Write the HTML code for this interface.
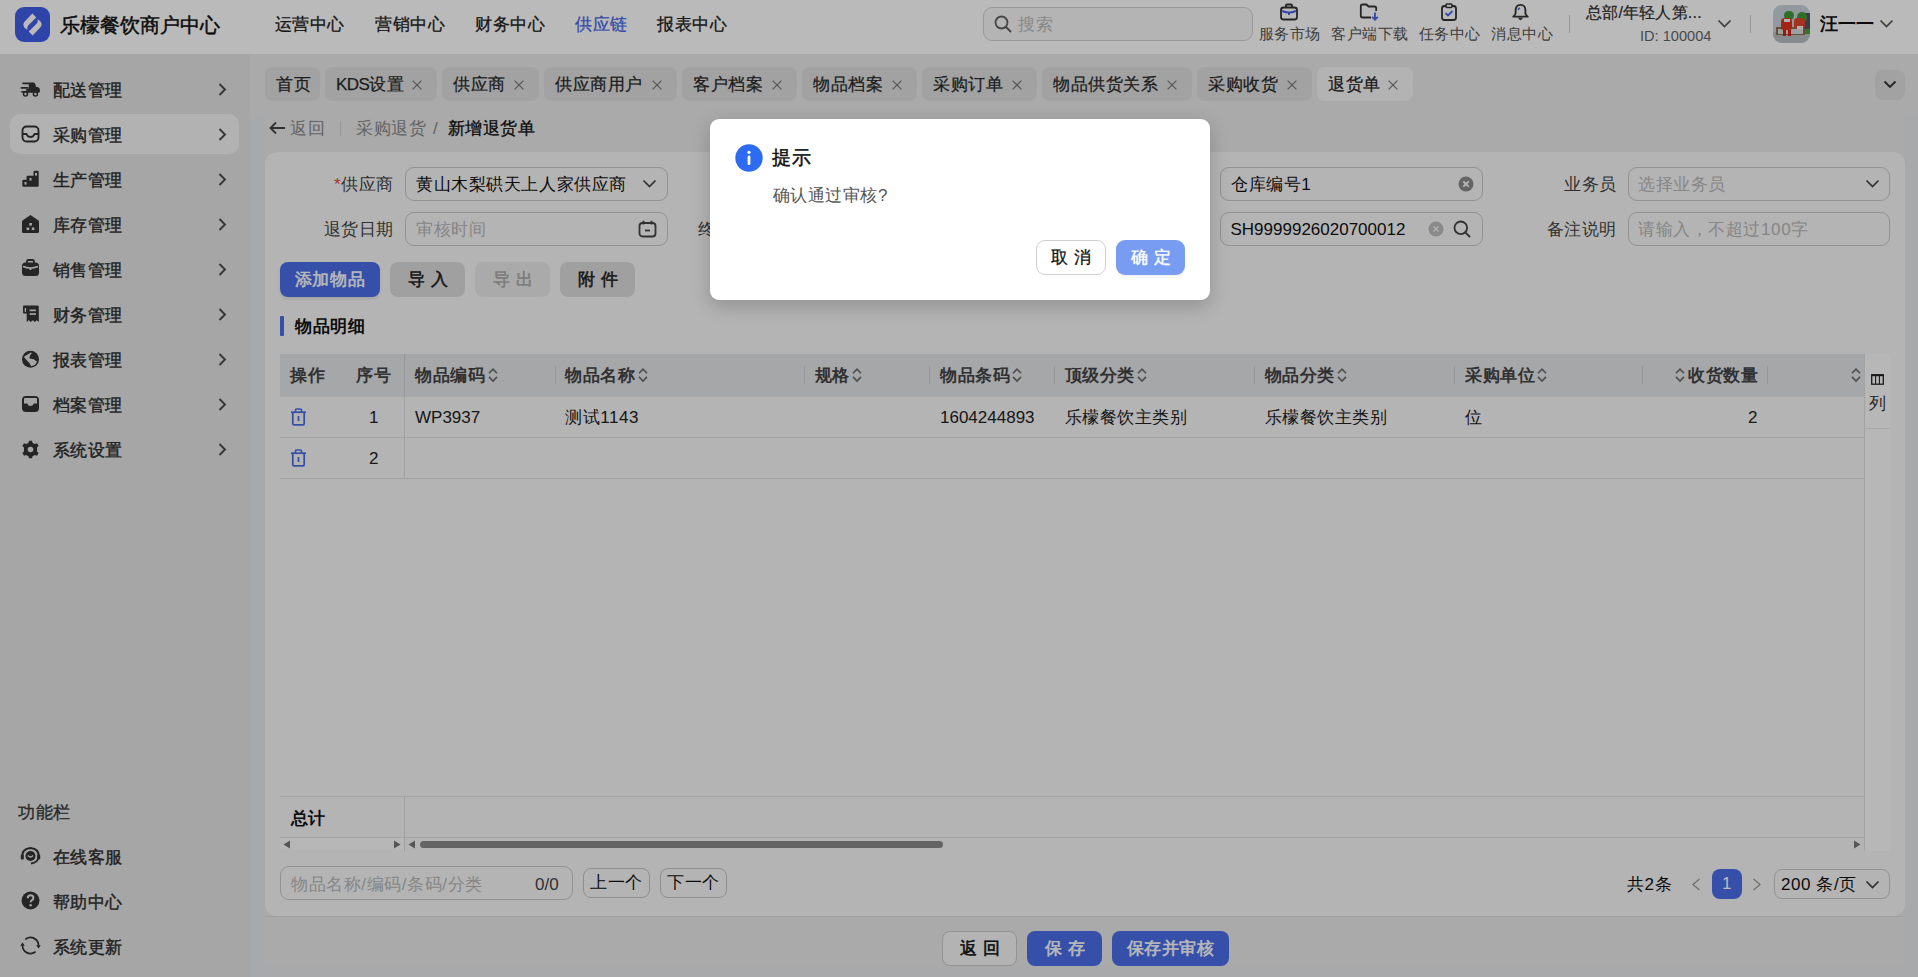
<!DOCTYPE html>
<html><head><meta charset="utf-8">
<style>
*{box-sizing:border-box;margin:0;padding:0}
html,body{width:1918px;height:977px;overflow:hidden}
body{font-family:"Liberation Sans",sans-serif;font-size:17px;letter-spacing:0.58px;color:#1f1f1f;background:#e6e8eb;position:relative}
.a{position:absolute;white-space:nowrap}
svg{display:block}
/* header */
#hdr{left:0;top:0;width:1918px;height:54px;background:#fff}
#side{left:0;top:54px;width:250px;height:923px;background:#e4e4e4}
#tabsbar{left:250px;top:54px;width:1668px;height:60px;background:#e9e9e9}
#page{left:265px;top:114px;width:1640px;height:852px;background:#e9e9e9}
#card{left:265px;top:152px;width:1640px;height:764px;background:#f7f7f7;border-radius:12px}
#bbar{left:265px;top:916px;width:1640px;height:50px;background:#e9e9e9;border-top:1px solid #dcdcdc}
.nav{top:14px;font-size:17px;line-height:22px;color:#222;-webkit-text-stroke:0.3px}
.si{left:10px;width:229px;height:40px;border-radius:10px}
.si .ic{position:absolute;left:11px;top:11px;width:19px;height:18px}
.si .t{position:absolute;left:43px;top:8px;font-size:17px;line-height:24px;font-weight:500;color:#333}
.si .cv{position:absolute;left:209px;top:14px}
.tab{top:67px;height:34px;border-radius:8px;background:#dfdfdf;font-size:17px;line-height:36px;color:#2a2a2a;-webkit-text-stroke:0.25px #2a2a2a;padding-left:11px}
.tab .x{position:absolute}
.lbl{font-size:17px;line-height:24px;color:#444;text-align:right}
.inp{height:34px;border:1px solid #c9c9c9;border-radius:9px;background:#f7f7f7}
.btn{height:35px;border-radius:8px;font-size:17px;line-height:35px;text-align:center;font-weight:400;-webkit-text-stroke:0.55px currentColor}
.th{top:364px;font-size:17px;line-height:24px;font-weight:700;color:#444}
.td{top:406px;font-size:17px;line-height:24px;color:#222}
.vd{top:366px;width:1px;height:18px;background:#cfcfcf}
#mask{left:0;top:0;width:1918px;height:977px;background:rgba(0,0,0,0.27)}
#modal{left:710px;top:119px;width:500px;height:181px;background:#fff;border-radius:9px;box-shadow:0 6px 20px rgba(0,0,0,0.2)}

.tl{top:23px;font-size:15px;line-height:22px;color:#555}
.st{left:52.5px;margin-top:2px;font-size:17px;line-height:24px;font-weight:500;color:#2e2e2e;-webkit-text-stroke:0.4px #2e2e2e}
.chev{left:218px}
.sort{top:366px;width:10px;height:18px}
</style></head><body>

<div class="a" id="tabsbar"></div>
<div class="a" id="page"></div>
<div class="a" id="card"></div>
<div class="a" id="bbar"></div>
<!-- HEADER -->
<div class="a" id="hdr">
  <div class="a" style="left:15px;top:7px;width:35px;height:35px;border-radius:9px;background:#405ee8">
    <svg width="35" height="35" viewBox="0 0 35 35" style="position:absolute;left:0;top:0">
      <defs><linearGradient id="lg1" x1="0" y1="0" x2="1" y2="1"><stop offset="0" stop-color="#fff"/><stop offset="0.55" stop-color="#fff"/><stop offset="1" stop-color="#fff" stop-opacity="0.55"/></linearGradient>
      <linearGradient id="lg2" x1="1" y1="1" x2="0" y2="0"><stop offset="0" stop-color="#fff"/><stop offset="0.55" stop-color="#fff"/><stop offset="1" stop-color="#fff" stop-opacity="0.55"/></linearGradient></defs>
      <path d="M17.4 6.6 L21.3 10.5 L13.2 18.6 Q11.9 20.1 12.4 22.8 Q8.3 20.6 8.4 17.4 Q8.5 16 9.7 14.4 Z" fill="url(#lg1)"/>
      <path d="M22.6 12.2 Q26.7 14.4 26.6 17.6 Q26.5 19 25.3 20.6 L17.6 28.4 L13.7 24.5 L21.8 16.4 Q23.1 14.9 22.6 12.2 Z" fill="url(#lg2)"/>
    </svg>
  </div>
  <div class="a" style="left:60px;top:12px;font-size:20px;line-height:26px;font-weight:400;color:#111;letter-spacing:0;-webkit-text-stroke:0.45px #111">乐檬餐饮商户中心</div>
  <div class="a nav" style="left:274.5px">运营中心</div>
  <div class="a nav" style="left:375px">营销中心</div>
  <div class="a nav" style="left:475px">财务中心</div>
  <div class="a nav" style="left:575px;color:#4a68e6">供应链</div>
  <div class="a nav" style="left:657px">报表中心</div>

  <div class="a" style="left:983px;top:7px;width:270px;height:34px;border:1px solid #d2d2d2;border-radius:9px;background:#f7f7f7"></div>
  <svg class="a" style="left:994px;top:15px" width="18" height="18" viewBox="0 0 18 18"><circle cx="7.5" cy="7.5" r="6" fill="none" stroke="#606060" stroke-width="1.8"/><path d="M12 12 L16.5 16.5" stroke="#606060" stroke-width="1.9" stroke-linecap="round"/></svg>
  <div class="a" style="left:1018px;top:14px;font-size:17px;line-height:22px;color:#bbb">搜索</div>

  <!-- tool icons -->
  <svg class="a" style="left:1279px;top:3px" width="20" height="18" viewBox="0 0 20 18"><rect x="2" y="4.5" width="16" height="12" rx="2.5" fill="none" stroke="#333" stroke-width="1.8"/><path d="M7 4.5 V2.5 Q7 1.5 8 1.5 H12 Q13 1.5 13 2.5 V4.5" fill="none" stroke="#333" stroke-width="1.8"/><path d="M3 8 Q10 11 17 8" fill="none" stroke="#4a68e6" stroke-width="2"/><path d="M10 9.5 V12" stroke="#4a68e6" stroke-width="2"/></svg>
  <svg class="a" style="left:1359px;top:3px" width="21" height="18" viewBox="0 0 21 18"><path d="M12 14.5 H3.5 Q1.8 14.5 1.8 12.8 V3.2 Q1.8 1.5 3.5 1.5 H7.5 L9.5 3.5 H15.5 Q17.2 3.5 17.2 5.2 V8" fill="none" stroke="#333" stroke-width="1.8" stroke-linejoin="round"/><path d="M16 9.5 V16.5 M13.2 13.8 L16 16.6 L18.8 13.8" fill="none" stroke="#4a68e6" stroke-width="1.9"/></svg>
  <svg class="a" style="left:1440px;top:3px" width="18" height="18" viewBox="0 0 18 18"><rect x="2" y="3" width="14" height="14" rx="2.5" fill="none" stroke="#333" stroke-width="1.8"/><rect x="6" y="1" width="6" height="3.5" rx="1" fill="#fff" stroke="#333" stroke-width="1.6"/><path d="M5.5 10 L8 12.5 L12.5 8" fill="none" stroke="#4a68e6" stroke-width="1.9"/></svg>
  <svg class="a" style="left:1511px;top:3px" width="19" height="18" viewBox="0 0 19 18"><path d="M9.5 1.8 Q4.6 1.8 4.6 7.5 V10.2 Q4.6 11.8 2.2 13.6 H16.8 Q14.4 11.8 14.4 10.2 V7.5 Q14.4 1.8 9.5 1.8 Z" fill="none" stroke="#333" stroke-width="1.8" stroke-linejoin="round"/><path d="M7.6 15.2 Q9.5 18.2 11.4 15.2 Z" fill="#333" stroke="#333" stroke-width="1"/><path d="M9 5 Q7.5 5.5 7 7" fill="none" stroke="#4a68e6" stroke-width="1.6"/></svg>
  <div class="a tl" style="left:1258.5px">服务市场</div>
  <div class="a tl" style="left:1331px">客户端下载</div>
  <div class="a tl" style="left:1418.5px">任务中心</div>
  <div class="a tl" style="left:1491px">消息中心</div>
  <div class="a" style="left:1569px;top:15px;width:1px;height:18px;background:#d0d0d0"></div>
  <div class="a" style="left:1586px;top:2px;font-size:16px;line-height:22px;color:#2e2e2e;letter-spacing:0.2px;-webkit-text-stroke:0.2px #2e2e2e">总部/年轻人第...</div>
  <div class="a" style="left:1640px;top:25px;font-size:14.6px;line-height:22px;color:#666;letter-spacing:0">ID: 100004</div>
  <svg class="a" style="left:1717px;top:19px" width="15" height="9" viewBox="0 0 15 9"><path d="M1.5 1.5 L7.5 7.5 L13.5 1.5" fill="none" stroke="#555" stroke-width="1.7"/></svg>
  <div class="a" style="left:1750px;top:15px;width:1px;height:18px;background:#d0d0d0"></div>
  <div class="a" style="left:1773px;top:5px;width:37px;height:38px;border-radius:9px;overflow:hidden;background:#c9d3da">
    <div class="a" style="left:0;top:27px;width:37px;height:11px;background:#b9bfc3"></div>
    <div class="a" style="left:31px;top:8px;width:6px;height:16px;background:#4a5560"></div>
    <div class="a" style="left:11px;top:6px;width:10px;height:9px;border-radius:5px;background:#3f9a3a"></div>
    <div class="a" style="left:24px;top:7px;width:10px;height:11px;border-radius:5px;background:#3f9a3a"></div>
    <div class="a" style="left:30px;top:24px;width:7px;height:5px;background:#45a040"></div>
    <div class="a" style="left:3px;top:22px;width:29px;height:8px;background:#8a7150"></div>
    <div class="a" style="left:5px;top:24px;width:25px;height:5px;background:#d8dadc"></div>
    <div class="a" style="left:8px;top:13px;width:11px;height:12px;border-radius:4px 4px 2px 2px;background:#e0301e"></div>
    <div class="a" style="left:11px;top:14px;width:6px;height:3px;background:#f2f2f2"></div>
    <div class="a" style="left:10px;top:25px;width:3px;height:6px;background:#d8201a"></div>
    <div class="a" style="left:15px;top:25px;width:3px;height:6px;background:#d8201a"></div>
    <div class="a" style="left:21px;top:13px;width:11px;height:11px;border-radius:3px;background:#e2442c"></div>
    <div class="a" style="left:24px;top:21px;width:6px;height:3px;background:#f0f0f0"></div>
  </div>
  <div class="a" style="left:1820px;top:12px;font-size:18px;line-height:24px;font-weight:700;color:#111;letter-spacing:0">汪一一</div>
  <svg class="a" style="left:1879px;top:19px" width="15" height="9" viewBox="0 0 15 9"><path d="M1.5 1.5 L7.5 7.5 L13.5 1.5" fill="none" stroke="#555" stroke-width="1.7"/></svg>
</div>
<!-- SIDEBAR -->
<div class="a" id="side">
  <div class="a si" style="top:60px;background:#f5f5f5"></div>
</div>
<div class="a" style="left:0;top:0">
<svg class="a" style="left:20px;top:80px" width="21" height="19" viewBox="0 0 21 19"><path d="M3.2 2.4 H13.6 Q14.6 2.4 15.1 3.4 L16.1 7 H17.6 Q19.9 7.6 19.9 9.8 V11.6 Q19.9 12.7 18.8 12.7 H6.3 V8.8 H8.8 V4.2 H3.2 Q2.3 4.2 2.3 3.3 Q2.3 2.4 3.2 2.4 Z" fill="#333"/><rect x="0.6" y="7.1" width="8" height="1.75" rx="0.85" fill="#333"/><rect x="1.1" y="10.9" width="6" height="1.75" rx="0.85" fill="#333"/><circle cx="5.5" cy="14" r="2" fill="#e4e4e4" stroke="#333" stroke-width="1.5"/><circle cx="15.4" cy="14" r="2" fill="#e4e4e4" stroke="#333" stroke-width="1.5"/></svg>
<svg class="a" style="left:21px;top:125px" width="19" height="18" viewBox="0 0 19 18"><rect x="1.5" y="1.5" width="16" height="15" rx="4" fill="none" stroke="#333" stroke-width="1.9"/><path d="M1.8 9 H5.5 Q6.5 12 9.5 12 Q12.5 12 13.5 9 H17.2" fill="none" stroke="#333" stroke-width="1.9" stroke-linejoin="round"/></svg>
<svg class="a" style="left:21px;top:170px" width="19" height="18" viewBox="0 0 19 18"><path d="M12.5 2 Q12.5 0.8 13.7 0.8 H16.5 Q17.7 0.8 17.7 2 V15.5 Q17.7 16.8 16.5 16.8 H2.5 Q1.3 16.8 1.3 15.5 V11 Q1.3 9.8 2.5 9.8 H5.5 V7 Q5.5 5.8 6.7 5.8 H12.5 Z" fill="#333"/><rect x="3.5" y="12" width="2" height="2.6" fill="#e4e4e4"/><rect x="8.5" y="8" width="2" height="2.6" fill="#e4e4e4"/><rect x="14" y="3" width="2" height="2.6" fill="#e4e4e4"/></svg>
<svg class="a" style="left:21px;top:214px" width="19" height="20" viewBox="0 0 19 20"><path d="M9.5 1 L17.5 6.5 Q18 7 18 8 V17.5 Q18 19 16.5 19 H2.5 Q1 19 1 17.5 V8 Q1 7 1.5 6.5 Z" fill="#333"/><rect x="8.3" y="9" width="2.6" height="2.6" fill="#e4e4e4"/><rect x="5.6" y="13.5" width="2.6" height="2.6" fill="#e4e4e4"/><rect x="10.8" y="13.5" width="2.6" height="2.6" fill="#e4e4e4"/></svg>
<svg class="a" style="left:21px;top:259px" width="19" height="18" viewBox="0 0 19 18"><path d="M6 4 V2.5 Q6 1 7.5 1 H11.5 Q13 1 13 2.5 V4" fill="none" stroke="#333" stroke-width="1.8"/><rect x="1" y="3.5" width="17" height="13.5" rx="3.5" fill="#333"/><path d="M2 7.5 Q9.5 10.5 17 7.5" fill="none" stroke="#e4e4e4" stroke-width="1.6"/><path d="M9.5 9 V11" stroke="#e4e4e4" stroke-width="1.8"/></svg>
<svg class="a" style="left:21px;top:305px" width="19" height="18" viewBox="0 0 19 18"><path d="M3 0.5 H16.5 Q17.8 0.5 17.8 1.8 V17 L15.8 15.2 L13.8 17 L11.8 15.2 L9.8 17 L7.8 15.2 L5.7 17 V8.6 H3 Q2 8.6 2 7.6 V1.5 Q2 0.5 3 0.5 Z" fill="#333"/><rect x="3.7" y="3" width="1.4" height="3.8" fill="#e4e4e4"/><rect x="8.6" y="4.5" width="6.3" height="1.7" fill="#e4e4e4"/><rect x="8.6" y="8.2" width="6.3" height="1.7" fill="#e4e4e4"/></svg>
<svg class="a" style="left:21px;top:350px" width="19" height="19" viewBox="0 0 19 19"><defs><clipPath id="gc"><circle cx="9.5" cy="9.3" r="6.9"/></clipPath></defs><circle cx="9.5" cy="9.3" r="8.5" fill="#333"/><path clip-path="url(#gc)" fill="#e4e4e4" d="M2 6 L3.2 6.4 L11.6 1.5 L11.1 2.8 Q8.4 5.4 8.4 7.4 Q8.8 8.6 9.8 8.7 Q12 8.9 13.4 9.7 Q14.6 10.6 16.6 12 L16 17 L10.1 17 Q9.6 14.8 8.8 13.6 Q7.2 11.6 5.5 10 Q3.8 8 2 6 Z"/></svg>
<svg class="a" style="left:21px;top:395px" width="19" height="18" viewBox="0 0 19 18"><rect x="1" y="1" width="17" height="16" rx="4" fill="#333"/><path d="M3 4 Q3 3 4 3 H15 Q16 3 16 4 V8.5 H12.8 Q12 11 9.5 11 Q7 11 6.2 8.5 H3 Z" fill="#e4e4e4"/></svg>
<svg class="a" style="left:21px;top:440px" width="19" height="19" viewBox="0 0 19 19"><path d="M8 0.8 H11 L11.6 3 Q12.8 3.4 13.8 4.1 L16 3.3 L17.6 6 L16 7.6 Q16.2 9.5 16 11.4 L17.6 13 L16 15.7 L13.8 14.9 Q12.8 15.6 11.6 16 L11 18.2 H8 L7.4 16 Q6.2 15.6 5.2 14.9 L3 15.7 L1.4 13 L3 11.4 Q2.8 9.5 3 7.6 L1.4 6 L3 3.3 L5.2 4.1 Q6.2 3.4 7.4 3 Z" fill="#333"/><circle cx="9.5" cy="9.5" r="2.8" fill="#e4e4e4"/></svg>
<svg class="a" style="left:20px;top:846px" width="21" height="19" viewBox="0 0 21 19"><path d="M2.5 11 Q1.5 3 10.5 2 Q19.5 3 18.5 11" fill="none" stroke="#333" stroke-width="2"/><path d="M18.5 11 Q18 16.5 11 17.5" fill="none" stroke="#333" stroke-width="1.8"/><circle cx="10.5" cy="10" r="5" fill="#333"/><path d="M8 9.5 Q10.5 12.5 13 9.5" fill="none" stroke="#e4e4e4" stroke-width="1.4"/><rect x="0.8" y="8.5" width="3" height="5" rx="1.2" fill="#333"/><rect x="17.2" y="8.5" width="3" height="5" rx="1.2" fill="#333"/></svg>
<svg class="a" style="left:21px;top:891px" width="19" height="19" viewBox="0 0 19 19"><circle cx="9.5" cy="9.5" r="9" fill="#333"/><path d="M6.8 7.2 Q6.8 4.3 9.6 4.3 Q12.4 4.3 12.4 6.9 Q12.4 8.5 10.7 9.3 Q9.6 9.9 9.6 11.2" fill="none" stroke="#e4e4e4" stroke-width="2"/><circle cx="9.6" cy="14.2" r="1.2" fill="#e4e4e4"/></svg>
<svg class="a" style="left:20px;top:936px" width="21" height="19" viewBox="0 0 21 19"><path d="M5.9 2.95 A8 8 0 0 1 18.5 9.5" fill="none" stroke="#333" stroke-width="1.75" stroke-linecap="round"/><path d="M15.1 16.05 A8 8 0 0 1 2.5 9.5" fill="none" stroke="#333" stroke-width="1.75" stroke-linecap="round"/><path d="M16.2 9.2 L20.8 9.2 L18.5 12.4 Z" fill="#333"/><path d="M0.2 9.8 L4.8 9.8 L2.5 6.6 Z" fill="#333"/></svg>
</div>
<div class="a st" style="top:77px">配送管理</div>
<div class="a st" style="top:122px">采购管理</div>
<div class="a st" style="top:167px">生产管理</div>
<div class="a st" style="top:212px">库存管理</div>
<div class="a st" style="top:257px">销售管理</div>
<div class="a st" style="top:302px">财务管理</div>
<div class="a st" style="top:347px">报表管理</div>
<div class="a st" style="top:392px">档案管理</div>
<div class="a st" style="top:437px">系统设置</div>
<svg class="a chev" style="top:83px" width="9" height="13" viewBox="0 0 9 13"><path d="M1.5 1 L7 6.5 L1.5 12" fill="none" stroke="#4a4a4a" stroke-width="1.9"/></svg>
<svg class="a chev" style="top:128px" width="9" height="13" viewBox="0 0 9 13"><path d="M1.5 1 L7 6.5 L1.5 12" fill="none" stroke="#4a4a4a" stroke-width="1.9"/></svg>
<svg class="a chev" style="top:173px" width="9" height="13" viewBox="0 0 9 13"><path d="M1.5 1 L7 6.5 L1.5 12" fill="none" stroke="#4a4a4a" stroke-width="1.9"/></svg>
<svg class="a chev" style="top:218px" width="9" height="13" viewBox="0 0 9 13"><path d="M1.5 1 L7 6.5 L1.5 12" fill="none" stroke="#4a4a4a" stroke-width="1.9"/></svg>
<svg class="a chev" style="top:263px" width="9" height="13" viewBox="0 0 9 13"><path d="M1.5 1 L7 6.5 L1.5 12" fill="none" stroke="#4a4a4a" stroke-width="1.9"/></svg>
<svg class="a chev" style="top:308px" width="9" height="13" viewBox="0 0 9 13"><path d="M1.5 1 L7 6.5 L1.5 12" fill="none" stroke="#4a4a4a" stroke-width="1.9"/></svg>
<svg class="a chev" style="top:353px" width="9" height="13" viewBox="0 0 9 13"><path d="M1.5 1 L7 6.5 L1.5 12" fill="none" stroke="#4a4a4a" stroke-width="1.9"/></svg>
<svg class="a chev" style="top:398px" width="9" height="13" viewBox="0 0 9 13"><path d="M1.5 1 L7 6.5 L1.5 12" fill="none" stroke="#4a4a4a" stroke-width="1.9"/></svg>
<svg class="a chev" style="top:443px" width="9" height="13" viewBox="0 0 9 13"><path d="M1.5 1 L7 6.5 L1.5 12" fill="none" stroke="#4a4a4a" stroke-width="1.9"/></svg>
<div class="a" style="left:18px;top:800.5px;font-size:17px;line-height:24px;font-weight:500;color:#3a3a3a;-webkit-text-stroke:0.35px #3a3a3a">功能栏</div>
<div class="a st" style="top:844px">在线客服</div>
<div class="a st" style="top:889px">帮助中心</div>
<div class="a st" style="top:934px">系统更新</div>
<svg width="0" height="0" style="position:absolute"><defs><symbol id="srt" viewBox="0 0 10 18"><path d="M1 7.3 L5 3.2 L9 7.3 M1 10.9 L5 15 L9 10.9" fill="none" stroke="#6a6a6a" stroke-width="1.6"/></symbol></defs></svg>
<!-- TABS -->
<div class="a tab" style="left:265px;width:55px">首页</div>
<div class="a tab" style="left:325px;width:112px"><span style="letter-spacing:-0.6px">KDS</span>设置<svg class="x" style="left:87px;top:13px" width="10" height="10" viewBox="0 0 10 10"><path d="M0.6 0.6 L9.4 9.4 M9.4 0.6 L0.6 9.4" stroke="#777" stroke-width="1.25"/></svg></div>
<div class="a tab" style="left:442px;width:97px">供应商<svg class="x" style="left:72px;top:13px" width="10" height="10" viewBox="0 0 10 10"><path d="M0.6 0.6 L9.4 9.4 M9.4 0.6 L0.6 9.4" stroke="#777" stroke-width="1.25"/></svg></div>
<div class="a tab" style="left:544px;width:133px">供应商用户<svg class="x" style="left:108px;top:13px" width="10" height="10" viewBox="0 0 10 10"><path d="M0.6 0.6 L9.4 9.4 M9.4 0.6 L0.6 9.4" stroke="#777" stroke-width="1.25"/></svg></div>
<div class="a tab" style="left:682px;width:115px">客户档案<svg class="x" style="left:90px;top:13px" width="10" height="10" viewBox="0 0 10 10"><path d="M0.6 0.6 L9.4 9.4 M9.4 0.6 L0.6 9.4" stroke="#777" stroke-width="1.25"/></svg></div>
<div class="a tab" style="left:802px;width:115px">物品档案<svg class="x" style="left:90px;top:13px" width="10" height="10" viewBox="0 0 10 10"><path d="M0.6 0.6 L9.4 9.4 M9.4 0.6 L0.6 9.4" stroke="#777" stroke-width="1.25"/></svg></div>
<div class="a tab" style="left:922px;width:115px">采购订单<svg class="x" style="left:90px;top:13px" width="10" height="10" viewBox="0 0 10 10"><path d="M0.6 0.6 L9.4 9.4 M9.4 0.6 L0.6 9.4" stroke="#777" stroke-width="1.25"/></svg></div>
<div class="a tab" style="left:1042px;width:150px">物品供货关系<svg class="x" style="left:125px;top:13px" width="10" height="10" viewBox="0 0 10 10"><path d="M0.6 0.6 L9.4 9.4 M9.4 0.6 L0.6 9.4" stroke="#777" stroke-width="1.25"/></svg></div>
<div class="a tab" style="left:1197px;width:115px">采购收货<svg class="x" style="left:90px;top:13px" width="10" height="10" viewBox="0 0 10 10"><path d="M0.6 0.6 L9.4 9.4 M9.4 0.6 L0.6 9.4" stroke="#777" stroke-width="1.25"/></svg></div>
<div class="a tab" style="left:1317px;width:96px;background:#f6f6f6;color:#222">退货单<svg class="x" style="left:71px;top:13px" width="10" height="10" viewBox="0 0 10 10"><path d="M0.6 0.6 L9.4 9.4 M9.4 0.6 L0.6 9.4" stroke="#777" stroke-width="1.25"/></svg></div>
<div class="a" style="left:1875px;top:70px;width:30px;height:30px;border-radius:8px;background:#dedede"></div>
<svg class="a" style="left:1883px;top:80px" width="14" height="9" viewBox="0 0 14 9"><path d="M1.5 1.5 L7 7 L12.5 1.5" fill="none" stroke="#333" stroke-width="1.9"/></svg>

<!-- BREADCRUMB -->
<svg class="a" style="left:269px;top:121px" width="17" height="14" viewBox="0 0 17 14"><path d="M7 1.5 L1.5 7 L7 12.5 M1.5 7 H16" fill="none" stroke="#444" stroke-width="1.8"/></svg>
<div class="a" style="left:290px;top:117px;font-size:17px;line-height:24px;color:#888">返回</div>
<div class="a" style="left:340px;top:121px;width:1px;height:15px;background:#d0d0d0"></div>
<div class="a" style="left:356px;top:117px;font-size:17px;line-height:24px;color:#888">采购退货</div>
<div class="a" style="left:433px;top:117px;font-size:17px;line-height:24px;color:#888">/</div>
<div class="a" style="left:447.5px;top:117px;font-size:17px;line-height:24px;color:#111;font-weight:500;-webkit-text-stroke:0.3px #111">新增退货单</div>

<!-- FORM -->
<div class="a lbl" style="left:294px;top:173px;width:100px"><span style="color:#e04b4b">*</span>供应商</div>
<div class="a inp" style="left:405px;top:167px;width:263px"></div>
<div class="a" style="left:416px;top:173px;font-size:17px;line-height:24px;color:#111">黄山木梨硔天上人家供应商</div>
<svg class="a chev2" style="left:642px;top:179px" width="15" height="9" viewBox="0 0 15 9"><path d="M1.5 1.5 L7.5 7.5 L13.5 1.5" fill="none" stroke="#444" stroke-width="1.7"/></svg>
<div class="a lbl" style="left:294px;top:218px;width:100px">退货日期</div>
<div class="a inp" style="left:405px;top:212px;width:263px"></div>
<div class="a" style="left:416px;top:218px;font-size:17px;line-height:24px;color:#b8b8b8">审核时间</div>
<svg class="a" style="left:638px;top:220px" width="19" height="18" viewBox="0 0 19 18"><rect x="1.5" y="3" width="16" height="13.5" rx="3" fill="none" stroke="#444" stroke-width="1.8"/><path d="M5.5 0.8 V4.5 M13.5 0.8 V4.5" stroke="#444" stroke-width="1.8"/><path d="M7 10.5 H12" stroke="#444" stroke-width="1.8"/></svg>
<div class="a lbl" style="left:698px;top:218px;text-align:left">终止退货日期</div>
<div class="a inp" style="left:1220px;top:167px;width:263px"></div>
<div class="a" style="left:1231px;top:173px;font-size:17px;line-height:24px;color:#111">仓库编号1</div>
<svg class="a" style="left:1458px;top:176px" width="16" height="16" viewBox="0 0 16 16"><circle cx="8" cy="8" r="7.5" fill="#8a8a8a"/><path d="M5.3 5.3 L10.7 10.7 M10.7 5.3 L5.3 10.7" stroke="#fff" stroke-width="1.7"/></svg>
<div class="a inp" style="left:1220px;top:212px;width:263px"></div>
<div class="a" style="left:1230.5px;top:218px;font-size:17px;line-height:24px;color:#111;letter-spacing:0">SH9999926020700012</div>
<svg class="a" style="left:1428px;top:221px" width="16" height="16" viewBox="0 0 16 16"><circle cx="8" cy="8" r="7.5" fill="#bdbdbd"/><path d="M5.5 5.5 L10.5 10.5 M10.5 5.5 L5.5 10.5" stroke="#f4f4f4" stroke-width="1.4"/></svg>
<svg class="a" style="left:1453px;top:220px" width="18" height="18" viewBox="0 0 18 18"><circle cx="7.8" cy="7.8" r="6.3" fill="none" stroke="#444" stroke-width="1.8"/><path d="M12.3 12.3 L16.5 16.5" stroke="#444" stroke-width="1.9" stroke-linecap="round"/></svg>
<div class="a lbl" style="left:1517px;top:173px;width:100px">业务员</div>
<div class="a inp" style="left:1628px;top:167px;width:262px"></div>
<div class="a" style="left:1638px;top:173px;font-size:17px;line-height:24px;color:#b8b8b8">选择业务员</div>
<svg class="a" style="left:1865px;top:179px" width="15" height="9" viewBox="0 0 15 9"><path d="M1.5 1.5 L7.5 7.5 L13.5 1.5" fill="none" stroke="#444" stroke-width="1.7"/></svg>
<div class="a lbl" style="left:1517px;top:218px;width:100px">备注说明</div>
<div class="a inp" style="left:1628px;top:212px;width:262px"></div>
<div class="a" style="left:1638px;top:218px;font-size:17px;line-height:24px;color:#b8b8b8">请输入，不超过100字</div>

<!-- BUTTONS -->
<div class="a btn" style="left:280px;top:262px;width:100px;background:#4a6ee8;color:#fff;box-shadow:0 2px 3px rgba(0,0,0,0.1)">添加物品</div>
<div class="a btn" style="left:390px;top:262px;width:75px;background:#dcdcdc;color:#222;letter-spacing:6px;text-indent:6px">导入</div>
<div class="a btn" style="left:475px;top:262px;width:75px;background:#eaeaea;color:#aaa;letter-spacing:6px;text-indent:6px">导出</div>
<div class="a btn" style="left:560px;top:262px;width:75px;background:#dcdcdc;color:#222;letter-spacing:6px;text-indent:6px">附件</div>

<!-- SECTION TITLE -->
<div class="a" style="left:280px;top:316px;width:4px;height:20px;background:#4a6ee8;border-radius:1px"></div>
<div class="a" style="left:295px;top:315px;font-size:17px;line-height:24px;font-weight:700;color:#111">物品明细</div>

<!-- TABLE -->
<div class="a" style="left:280px;top:354px;width:1585px;height:43px;background:#e4e5e8"></div>
<div class="a" style="left:280px;top:437px;width:1585px;height:1px;background:#e0e0e0"></div>
<div class="a" style="left:280px;top:478px;width:1585px;height:1px;background:#e0e0e0"></div>
<div class="a" style="left:404px;top:354px;width:1px;height:125px;background:#dcdcdc"></div>
<div class="a" style="left:404px;top:354px;width:1px;height:43px;background:#cfd0d3"></div>
<div class="a" style="left:1865px;top:354px;width:25px;height:497px;background:#fbfbfb"></div>
<div class="a" style="left:1864px;top:354px;width:1px;height:497px;background:#e0e0e0"></div>
<div class="a" style="left:1866px;top:428px;width:24px;height:1px;background:#e6e6e6"></div>
<div class="a th" style="left:290px">操作</div>
<div class="a th" style="left:356px">序号</div>
<div class="a th" style="left:415px">物品编码</div>
<div class="a th" style="left:565px">物品名称</div>
<div class="a th" style="left:814.5px">规格</div>
<div class="a th" style="left:940px">物品条码</div>
<div class="a th" style="left:1064.5px">顶级分类</div>
<div class="a th" style="left:1264.5px">物品分类</div>
<div class="a th" style="left:1465px">采购单位</div>
<div class="a th" style="left:1688px">收货数量</div>
<div class="a vd" style="left:554.5px"></div>
<div class="a vd" style="left:804px"></div>
<div class="a vd" style="left:929px"></div>
<div class="a vd" style="left:1054px"></div>
<div class="a vd" style="left:1254px"></div>
<div class="a vd" style="left:1454px"></div>
<div class="a vd" style="left:1641.5px"></div>
<div class="a vd" style="left:1766.5px"></div>
<svg class="a sort" style="left:487.5px"><use href="#srt"/></svg>
<svg class="a sort" style="left:637.5px"><use href="#srt"/></svg>
<svg class="a sort" style="left:852px"><use href="#srt"/></svg>
<svg class="a sort" style="left:1012px"><use href="#srt"/></svg>
<svg class="a sort" style="left:1137px"><use href="#srt"/></svg>
<svg class="a sort" style="left:1337px"><use href="#srt"/></svg>
<svg class="a sort" style="left:1537px"><use href="#srt"/></svg>
<svg class="a sort" style="left:1675px"><use href="#srt"/></svg>
<svg class="a sort" style="left:1850.5px"><use href="#srt"/></svg>
<svg class="a" style="left:1871px;top:374px" width="13" height="11" viewBox="0 0 13 11"><rect x="0.7" y="0.8" width="11.6" height="9.4" fill="none" stroke="#222" stroke-width="1.3"/><path d="M0.7 1.3 H12.3" stroke="#222" stroke-width="1.8"/><path d="M4.6 1.5 V10 M8.4 1.5 V10" stroke="#222" stroke-width="1.1"/></svg>
<div class="a" style="left:1868.5px;top:391.5px;font-size:17px;line-height:24px;color:#333">列</div>

<svg class="a" style="left:290px;top:408px" width="17" height="18" viewBox="0 0 17 18"><path d="M1 4.2 H16" stroke="#4a6ee8" stroke-width="1.8"/><path d="M5.5 4 V2 Q5.5 1 6.5 1 H10.5 Q11.5 1 11.5 2 V4" fill="none" stroke="#4a6ee8" stroke-width="1.6"/><path d="M2.8 4.5 V15.5 Q2.8 16.8 4.1 16.8 H12.9 Q14.2 16.8 14.2 15.5 V4.5" fill="none" stroke="#4a6ee8" stroke-width="1.8"/><path d="M8.5 8 V13" stroke="#4a6ee8" stroke-width="1.8"/></svg>
<svg class="a" style="left:290px;top:449px" width="17" height="18" viewBox="0 0 17 18"><path d="M1 4.2 H16" stroke="#4a6ee8" stroke-width="1.8"/><path d="M5.5 4 V2 Q5.5 1 6.5 1 H10.5 Q11.5 1 11.5 2 V4" fill="none" stroke="#4a6ee8" stroke-width="1.6"/><path d="M2.8 4.5 V15.5 Q2.8 16.8 4.1 16.8 H12.9 Q14.2 16.8 14.2 15.5 V4.5" fill="none" stroke="#4a6ee8" stroke-width="1.8"/><path d="M8.5 8 V13" stroke="#4a6ee8" stroke-width="1.8"/></svg>
<div class="a td" style="left:340px;width:39px;text-align:right">1</div>
<div class="a td" style="left:340px;top:447px;width:39px;text-align:right">2</div>
<div class="a td" style="left:415px;letter-spacing:0">WP3937</div>
<div class="a td" style="left:565px">测试1143</div>
<div class="a td" style="left:940px;letter-spacing:0">1604244893</div>
<div class="a td" style="left:1064.5px">乐檬餐饮主类别</div>
<div class="a td" style="left:1264.5px">乐檬餐饮主类别</div>
<div class="a td" style="left:1465px">位</div>
<div class="a td" style="left:1700px;width:58px;text-align:right">2</div>

<!-- FOOTER -->
<div class="a" style="left:280px;top:796px;width:1585px;height:1px;background:#e0e0e0"></div>
<div class="a" style="left:280px;top:837px;width:1585px;height:1px;background:#e0e0e0"></div>
<div class="a" style="left:404px;top:797px;width:1px;height:54px;background:#dcdcdc"></div>
<div class="a" style="left:290.5px;top:806.5px;font-size:17px;line-height:24px;font-weight:700;color:#111">总计</div>
<div class="a" style="left:280px;top:838px;width:124px;height:12px;background:#fbfbfb"></div>
<svg class="a" style="left:283px;top:840px" width="8" height="9" viewBox="0 0 8 9"><path d="M7 0.5 V8.5 L0.5 4.5 Z" fill="#777"/></svg>
<svg class="a" style="left:393px;top:840px" width="8" height="9" viewBox="0 0 8 9"><path d="M1 0.5 V8.5 L7.5 4.5 Z" fill="#777"/></svg>
<svg class="a" style="left:408px;top:840px" width="8" height="9" viewBox="0 0 8 9"><path d="M7 0.5 V8.5 L0.5 4.5 Z" fill="#777"/></svg>
<div class="a" style="left:420px;top:841px;width:523px;height:7px;border-radius:4px;background:#8a8a8a"></div>
<svg class="a" style="left:1853px;top:840px" width="8" height="9" viewBox="0 0 8 9"><path d="M1 0.5 V8.5 L7.5 4.5 Z" fill="#777"/></svg>

<!-- SEARCH ROW -->
<div class="a inp" style="left:280px;top:866px;width:293px"></div>
<div class="a" style="left:291px;top:873px;font-size:17px;line-height:24px;color:#b8b8b8">物品名称/编码/条码/分类</div>
<div class="a" style="left:535px;top:873px;font-size:17px;line-height:24px;color:#444;letter-spacing:0">0/0</div>
<div class="a" style="left:583px;top:868px;width:67px;height:30px;border:1px solid #c4c4c4;border-radius:8px;font-size:17px;line-height:28px;text-align:center;color:#111">上一个</div>
<div class="a" style="left:660px;top:868px;width:67px;height:30px;border:1px solid #c4c4c4;border-radius:8px;font-size:17px;line-height:28px;text-align:center;color:#111">下一个</div>

<!-- PAGINATION -->
<div class="a" style="left:1627px;top:873px;font-size:17px;line-height:24px;color:#111">共2条</div>
<svg class="a" style="left:1691px;top:878px" width="10" height="13" viewBox="0 0 10 13"><path d="M8.5 1 L2 6.5 L8.5 12" fill="none" stroke="#999" stroke-width="1.3"/></svg>
<div class="a" style="left:1712px;top:869px;width:30px;height:30px;border-radius:8px;background:#4a6ee8;color:#fff;font-size:17px;line-height:30px;text-align:center">1</div>
<svg class="a" style="left:1752px;top:878px" width="10" height="13" viewBox="0 0 10 13"><path d="M1.5 1 L8 6.5 L1.5 12" fill="none" stroke="#999" stroke-width="1.3"/></svg>
<div class="a inp" style="left:1774px;top:869px;width:116px;height:30px;border-radius:8px"></div>
<div class="a" style="left:1781px;top:873px;font-size:17px;line-height:24px;color:#111">200 条/页</div>
<svg class="a" style="left:1865px;top:880px" width="15" height="9" viewBox="0 0 15 9"><path d="M1.5 1.5 L7.5 7.5 L13.5 1.5" fill="none" stroke="#444" stroke-width="1.7"/></svg>

<!-- BOTTOM BAR -->
<div class="a btn" style="left:942px;top:931px;width:75px;border:1px solid #c8c8c8;background:#f6f6f6;color:#111;font-weight:400;line-height:33px;letter-spacing:6px;text-indent:6px">返回</div>
<div class="a btn" style="left:1027px;top:931px;width:75px;background:#4a6ee8;color:#fff;letter-spacing:6px;text-indent:6px">保存</div>
<div class="a btn" style="left:1112px;top:931px;width:117px;background:#4a6ee8;color:#fff">保存并审核</div>

<div class="a" id="mask"></div>
<div class="a" id="modal">
  <svg class="a" style="left:24.5px;top:24.5px" width="28" height="28" viewBox="0 0 28 28"><circle cx="14" cy="14" r="13.7" fill="#2d6cf0"/><circle cx="14" cy="8.3" r="1.6" fill="#fff"/><rect x="12.6" y="11.5" width="2.8" height="9.5" rx="1.2" fill="#fff"/></svg>
  <div class="a" style="left:62px;top:26px;font-size:19px;line-height:26px;font-weight:500;color:#111;-webkit-text-stroke:0.5px #111">提示</div>
  <div class="a" style="left:62.5px;top:65px;font-size:17px;line-height:24px;color:#555">确认通过审核?</div>
  <div class="a" style="left:326px;top:121px;width:70px;height:35px;border:1px solid #cfcfcf;border-radius:9px;font-size:17px;line-height:33px;text-align:center;color:#111;letter-spacing:6px;text-indent:6px;-webkit-text-stroke:0.3px #111">取消</div>
  <div class="a" style="left:406px;top:121px;width:69px;height:35px;border-radius:9px;background:#779cf2;font-size:17px;line-height:35px;text-align:center;color:#fff;letter-spacing:6px;text-indent:6px;font-weight:500;-webkit-text-stroke:0.4px #fff;box-shadow:0 2px 3px rgba(0,0,0,0.06)">确定</div>
</div>

</body></html>
